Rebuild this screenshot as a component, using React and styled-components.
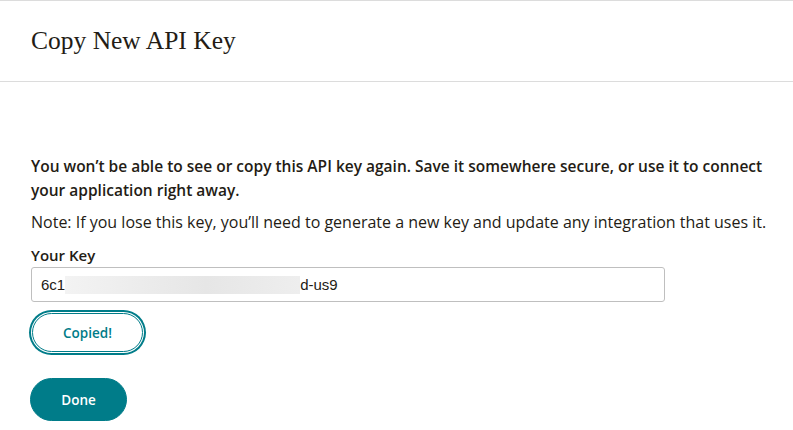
import React from "react";
import styled, { createGlobalStyle } from "styled-components";

const GlobalStyle = createGlobalStyle`
  body {
    margin: 0;
    background: #fff;
    font-family: "Open Sans", "Liberation Sans", sans-serif;
    color: #241c15;
  }
`;

const teal = "#007c89";

const Page = styled.div`
  width: 793px;
  height: 430px;
  overflow: hidden;
  border-top: 1px solid #dcdcdc;
  box-sizing: border-box;
`;

const Header = styled.header`
  height: 80px;
  display: flex;
  align-items: center;
  padding: 0 31px;
  border-bottom: 1px solid #dcdcdc;
`;

const Title = styled.h1`
  margin: 0;
  font-family: "Liberation Serif", "DejaVu Serif", serif;
  font-weight: 400;
  font-size: 25.5px;
  color: #241c15;
`;

const Body = styled.main`
  padding: 72px 16px 0 31px;
  display: flex;
  flex-direction: column;
  align-items: flex-start;
`;

const Lead = styled.p`
  margin: 0;
  font-size: 15.5px;
  font-weight: 600;
  line-height: 24px;
  white-space: nowrap;
`;

const Note = styled.p`
  margin: 9px 0 0;
  font-size: 16px;
  line-height: 22px;
  white-space: nowrap;
`;

const Label = styled.label`
  margin-top: 11px;
  font-size: 15px;
  font-weight: 600;
  line-height: 22px;
`;

const KeyField = styled.div`
  margin-top: 1px;
  width: 634px;
  height: 35px;
  box-sizing: border-box;
  border: 1px solid #bfbfbf;
  border-radius: 3px;
  display: flex;
  align-items: center;
  padding: 0 9px;
  font-size: 15px;
  font-family: "Liberation Sans", Arial, sans-serif;
`;

const Blur = styled.span`
  display: inline-block;
  width: 235px;
  height: 18px;
  background: linear-gradient(90deg, #f3f3f3, #e6e6e6 60%, #eeeeee);
`;

const Button = styled.button`
  font-family: "Open Sans", "Liberation Sans", sans-serif;
  font-size: 13.5px;
  font-weight: 600;
  border-radius: 999px;
  cursor: pointer;
  border: 1px solid ${teal};
  background: ${(p) => (p.$primary ? teal : "#fff")};
  color: ${(p) => (p.$primary ? "#fff" : teal)};
`;

const CopiedButton = styled(Button)`
  margin: 11px 0 0 1px;
  width: 111px;
  height: 39px;
  box-shadow: 0 0 0 1px #fff, 0 0 0 3px ${teal};
`;

const DoneButton = styled(Button)`
  margin-top: 26px;
  width: 97px;
  height: 43px;
  margin-left: -1px;
`;

export default function App() {
  return (
    <Page>
      <GlobalStyle />
      <Header>
        <Title>Copy New API Key</Title>
      </Header>
      <Body>
        <Lead>
          You won’t be able to see or copy this API key again. Save it somewhere secure, or use it to connect
          <br />
          your application right away.
        </Lead>
        <Note>
          Note: If you lose this key, you’ll need to generate a new key and update any integration that uses it.
        </Note>
        <Label>Your Key</Label>
        <KeyField>
          <span>6c1</span>
          <Blur />
          <span>d-us9</span>
        </KeyField>
        <CopiedButton>Copied!</CopiedButton>
        <DoneButton $primary>Done</DoneButton>
      </Body>
    </Page>
  );
}
